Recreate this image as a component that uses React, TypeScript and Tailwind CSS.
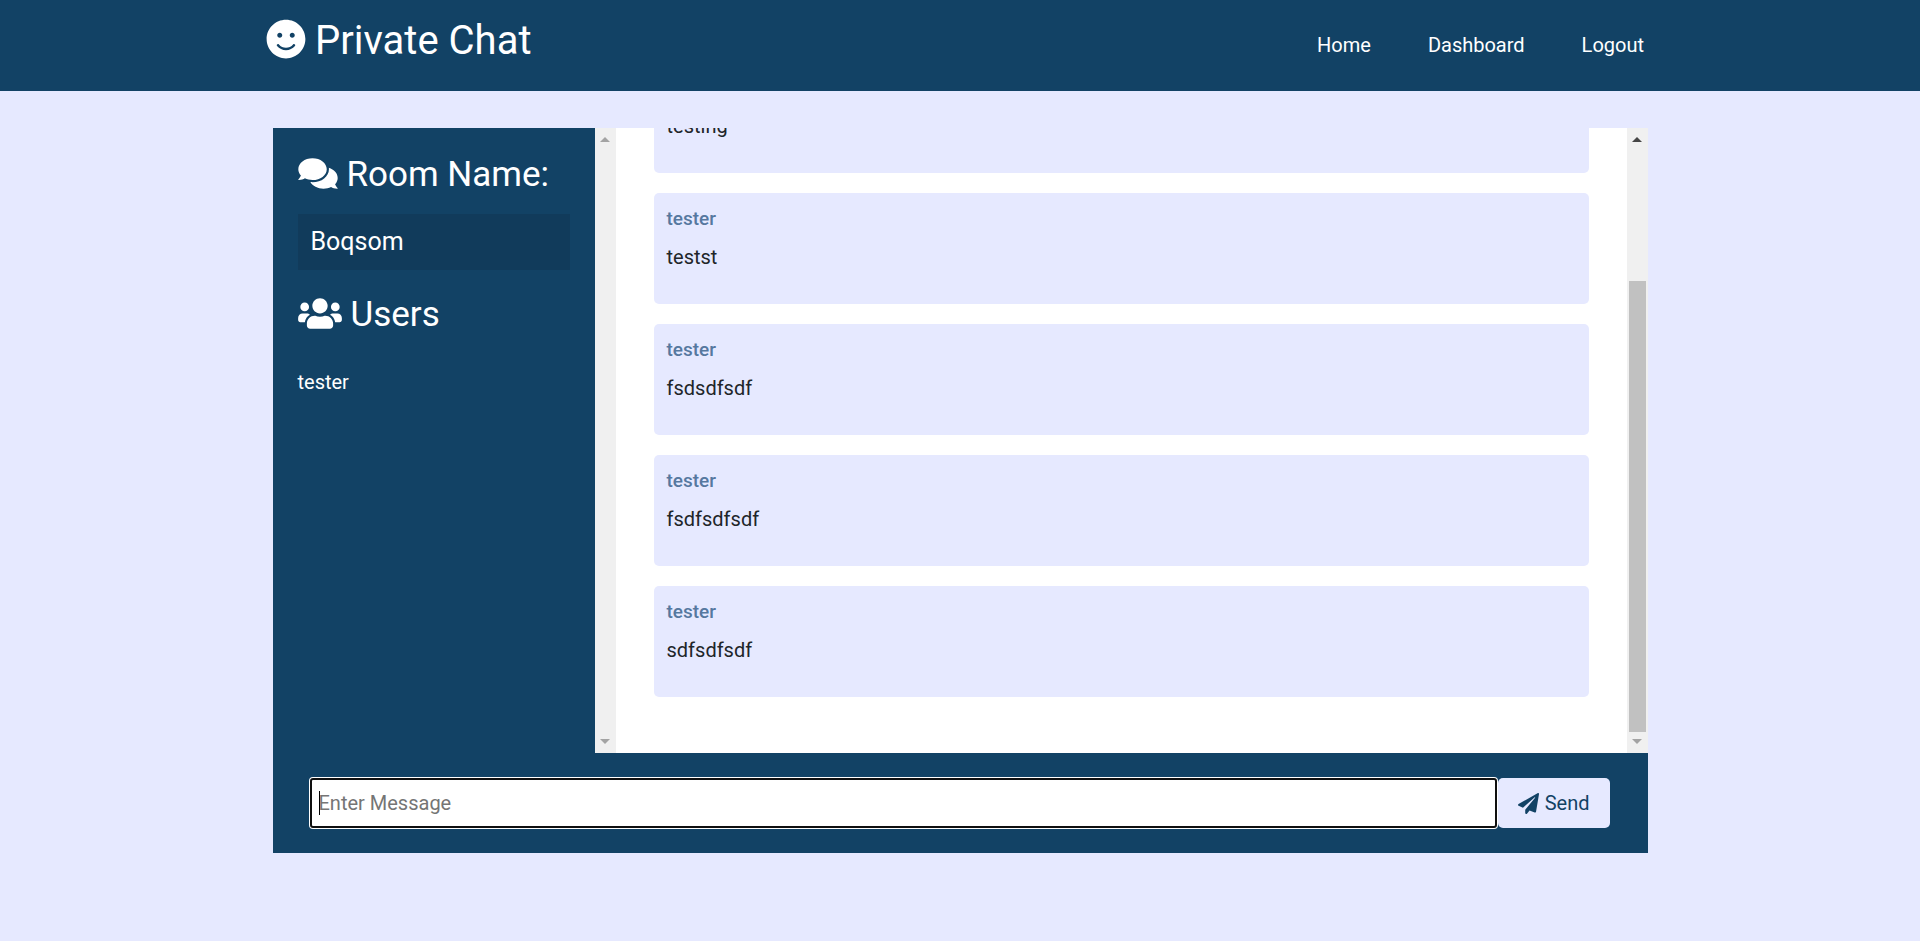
import { FaComments, FaPaperPlane, FaSmile, FaUsers } from "react-icons/fa";

type Message = { user: string; text: string };

const messages: Message[] = [
  { user: "tester", text: "testing" },
  { user: "tester", text: "testst" },
  { user: "tester", text: "fsdsdfsdf" },
  { user: "tester", text: "fsdfsdfsdf" },
  { user: "tester", text: "sdfsdfsdf" },
];

const users = ["tester"];

const links = ["Home", "Dashboard", "Logout"];

function Arrow({ down = false, active = false }: { down?: boolean; active?: boolean }) {
  return (
    <svg
      viewBox="0 0 10 5"
      className={`h-[5px] w-[10px] ${down ? "rotate-180" : ""} ${active ? "fill-[#454545]" : "fill-[#a3a3a3]"}`}
    >
      <path d="M5 0 10 5H0z" />
    </svg>
  );
}

function ScrollTrack({ scrollable = false }: { scrollable?: boolean }) {
  return (
    <div aria-hidden="true" className="flex w-[21px] shrink-0 flex-col items-center bg-[#f0f0f0]">
      <div className="flex h-[21px] items-end pb-[7px]">
        <Arrow active={scrollable} />
      </div>
      <div className="flex w-[17px] flex-1 flex-col justify-end">
        {scrollable && <div className="h-[451px] bg-[#c1c1c1]" />}
      </div>
      <div className="flex h-[21px] items-start pt-[7px]">
        <Arrow down />
      </div>
    </div>
  );
}

function MessageCard({ user, text }: Message) {
  return (
    <article className="shrink-0 rounded-[5px] bg-[#e6e9ff] px-[13px] pt-3 pb-8">
      <p className="text-[19px] leading-7 font-medium text-[#56789f]">{user}</p>
      <p className="mt-[9px] text-[20px] leading-[30px] text-[#212529]">{text}</p>
    </article>
  );
}

export default function App() {
  return (
    <div className="min-h-screen bg-[#e6e9ff] font-[Roboto,sans-serif] text-[20px]">
      <header className="bg-[#124265] text-white">
        <div className="mx-auto flex h-[91px] max-w-[1388px] items-start justify-between pr-[10px]">
          <h1 className="flex items-center gap-[9px] pt-[17px] text-[40px] leading-[48px]">
            <FaSmile className="mb-1 h-10 w-10" />
            Private Chat
          </h1>
          <nav className="flex gap-[57px] pt-[30px]">
            {links.map((link) => (
              <a key={link} href="#" className="leading-[30px]">
                {link}
              </a>
            ))}
          </nav>
        </div>
      </header>

      <main className="mx-auto mt-[37px] max-w-[1375px]">
        <div className="flex h-[625px]">
          <aside className="w-[322px] shrink-0 bg-[#124265] px-[25px] py-[26px] text-white">
            <h2 className="flex items-center gap-[9px] text-[35px] leading-[42px]">
              <FaComments className="mb-[3px] h-[35px] w-10" />
              Room Name:
            </h2>
            <p className="mt-[18px] bg-[#113b5b] px-[13px] text-[25px] leading-[56px]">Boqsom</p>
            <h2 className="mt-6 flex items-center gap-[9px] text-[35px] leading-[42px]">
              <FaUsers className="mb-[3px] h-[35px] w-11" />
              Users
            </h2>
            <ul className="mt-[31px]">
              {users.map((user) => (
                <li key={user} className="leading-[30px]">
                  {user}
                </li>
              ))}
            </ul>
          </aside>
          <ScrollTrack />
          <section className="flex min-w-0 flex-1 flex-col justify-end gap-5 overflow-hidden bg-white px-[38px] pb-14">
            {messages.map((message, index) => (
              <MessageCard key={index} {...message} />
            ))}
          </section>
          <ScrollTrack scrollable />
        </div>

        <form
          className="flex bg-[#124265] py-[25px] pr-[38px] pl-[37px]"
          onSubmit={(event) => event.preventDefault()}
        >
          <div className="relative flex min-w-0 flex-1">
            <input
              type="text"
              aria-label="Message"
              placeholder="Enter Message"
              autoFocus
              className="peer h-[50px] w-full rounded-[3px] border-2 border-[#101010] bg-white px-[7px] text-[#212529] ring-1 ring-white outline-none placeholder:text-[#757575] placeholder-shown:caret-transparent"
            />
            <span
              aria-hidden="true"
              className="pointer-events-none absolute inset-y-[13px] left-[9px] hidden w-px bg-black peer-placeholder-shown:block"
            />
          </div>
          <button
            type="submit"
            className="ml-px flex h-[50px] items-center gap-[6px] rounded-[5px] bg-[#e6e9ff] px-5 text-[#124265]"
          >
            <FaPaperPlane className="h-[21px] w-[21px]" />
            Send
          </button>
        </form>
      </main>
    </div>
  );
}
